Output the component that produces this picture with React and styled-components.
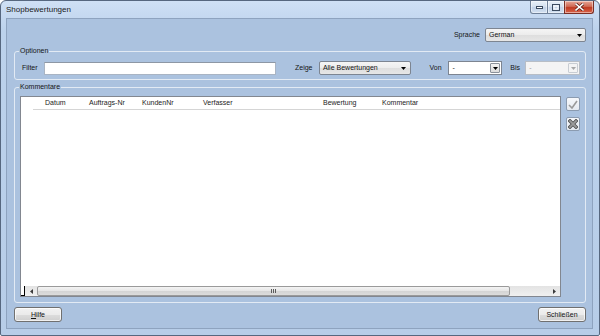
import React from 'react';
import styled, { createGlobalStyle } from 'styled-components';

const Global = createGlobalStyle`
  html, body { margin: 0; padding: 0; background: #ffffff; }
  body { font-family: "Liberation Sans", Arial, sans-serif; font-size: 7px; color: #111; }
  * { box-sizing: border-box; }
`;

const Window = styled.div`
  width: 600px;
  height: 336px;
  display: flex;
  flex-direction: column;
  border: 1px solid #56677f;
  border-radius: 6px 6px 2px 2px;
  background: linear-gradient(#cfe0f5, #bcd2ec 30px, #b7cde8);
  overflow: hidden;
`;

const TitleBar = styled.div`
  height: 17px;
  flex: none;
  display: flex;
  align-items: flex-start;
  padding-left: 5px;
`;

const Title = styled.div`
  font-size: 8px;
  line-height: 8px;
  margin-top: 5px;
  color: #1a1a1a;
`;

const CaptionGroup = styled.div`
  margin-left: auto;
  margin-right: 5px;
  display: flex;
`;

const CaptionBtn = styled.div`
  width: ${p => p.$w}px;
  height: 13px;
  display: flex;
  align-items: center;
  justify-content: center;
  border: 1px solid ${p => (p.$close ? '#7a2f25' : '#6f8098')};
  border-top: none;
  margin-left: -1px;
  background: ${p =>
    p.$close
      ? 'linear-gradient(#e8a898, #d06a55 45%, #c03a22 55%, #d9644a)'
      : 'linear-gradient(#e9f0f8, #d6e2f0 45%, #c3d3e8 55%, #d2e0f0)'};
  border-radius: ${p => p.$r};
  box-shadow: inset 0 0 0 1px rgba(255,255,255,0.45);
`;

const Client = styled.div`
  flex: 1;
  margin: 0 6px 6px 5px;
  background: #abc2df;
  border: 1px solid #8ea3bf;
  display: flex;
  flex-direction: column;
`;

const TopRow = styled.div`
  display: flex;
  justify-content: flex-end;
  align-items: center;
  margin-top: 9px;
  padding-right: 6px;
  height: 14px;
`;

const Label = styled.span`
  display: inline-block;
  width: ${p => (p.$w ? `${p.$w}px` : 'auto')};
  margin-left: ${p => p.$ml || 0}px;
  margin-right: ${p => p.$mr || 0}px;
  line-height: 14px;
  white-space: nowrap;
  color: #151515;
`;

const Combo = styled.div`
  width: ${p => p.$w}px;
  height: 14px;
  display: flex;
  align-items: center;
  padding-left: 3px;
  border: 1px solid ${p => (p.$disabled ? '#b8bec6' : '#7d8591')};
  border-radius: ${p => (p.$edit ? '0' : '2px')};
  background: ${p =>
    p.$disabled
      ? '#f4f4f4'
      : p.$edit
      ? '#ffffff'
      : 'linear-gradient(#f5f5f5, #ececec 50%, #dedede 51%, #e6e6e6)'};
  color: ${p => (p.$disabled ? '#9a9a9a' : '#111')};
  white-space: nowrap;
`;

const ComboText = styled.span`
  flex: 1;
  line-height: 12px;
`;

const ArrowBox = styled.div`
  width: ${p => (p.$boxed ? 10 : 12)}px;
  height: ${p => (p.$boxed ? 10 : 12)}px;
  margin-right: ${p => (p.$boxed ? 1 : 0)}px;
  display: flex;
  align-items: center;
  justify-content: center;
  border: ${p => (p.$boxed ? `1px solid ${p.$disabled ? '#c8cdd3' : '#8b929b'}` : 'none')};
  border-radius: 1px;
  background: ${p =>
    p.$boxed ? (p.$disabled ? '#f4f4f4' : 'linear-gradient(#f3f3f3, #dcdcdc)') : 'transparent'};
`;

const TextInput = styled.div`
  width: ${p => p.$w}px;
  height: 13px;
  background: #ffffff;
  border: 1px solid #a9b4c3;
  border-top-color: #8d97a5;
`;

const Group = styled.div`
  border: 1px solid #e2eaf4;
  border-radius: 3px;
  display: flex;
  flex-direction: column;
  margin: ${p => p.$mt}px 6px 0 7px;
  flex: ${p => (p.$grow ? 1 : 'none')};
  min-height: 0;
`;

const Legend = styled.div`
  align-self: flex-start;
  margin: -5px 0 -3px 4px;
  padding: 0 1px;
  height: 8px;
  line-height: 8px;
  background: #abc2df;
  color: #151515;
`;

const FilterRow = styled.div`
  display: flex;
  align-items: center;
  padding: 9px 5px 4px 6px;
`;

const CommentsBody = styled.div`
  flex: 1;
  display: flex;
  gap: 5px;
  padding: 8px 5px 5px 5px;
  min-height: 0;
`;

const Grid = styled.div`
  flex: 1;
  background: #ffffff;
  border: 1px solid #828790;
  display: flex;
  flex-direction: column;
`;

const HeaderRow = styled.div`
  margin-left: 12px;
  height: 13px;
  border-bottom: 1px solid #d5d5d5;
  display: grid;
  grid-template-columns: 12px 44px 53px 61px 120px 59px 1fr;
  align-items: center;
`;

const HeaderCell = styled.div`
  white-space: nowrap;
  color: #1c1c1c;
  line-height: 12px;
`;

const GridBody = styled.div`
  flex: 1;
`;

const ScrollBar = styled.div`
  height: 10px;
  display: flex;
  background: linear-gradient(#e3e3e3, #f0f0f0);
`;

const Corner = styled.div`
  width: 4px;
  border-right: 1px solid #000;
  border-bottom: 1px solid #000;
  background: #fff;
`;

const ScrollArrow = styled.div`
  width: 12px;
  display: flex;
  align-items: center;
  justify-content: center;
`;

const Thumb = styled.div`
  width: 473px;
  height: 10px;
  border: 1px solid #9a9a9a;
  border-radius: 2px;
  background: linear-gradient(#f4f4f4, #e6e6e6 50%, #d4d4d4 51%, #dcdcdc);
  display: flex;
  align-items: center;
  justify-content: center;
`;

const Grip = styled.div`
  display: flex;
  gap: 1px;
`;

const GripLine = styled.div`
  width: 1px;
  height: 4px;
  background: #5c5c5c;
`;

const Track = styled.div`
  flex: 1;
`;

const SideCol = styled.div`
  width: 14px;
  display: flex;
  flex-direction: column;
  gap: 6px;
  padding-top: 1px;
`;

const SideBtn = styled.div`
  width: 14px;
  height: 14px;
  border: 1px solid #8b9bb0;
  border-radius: 2px;
  background: linear-gradient(#f6f8fb, #e4e9f0);
  display: flex;
  align-items: center;
  justify-content: center;
`;

const BottomRow = styled.div`
  display: flex;
  justify-content: space-between;
  margin: 4px 6px 6px 7px;
`;

const Button = styled.div`
  width: 48px;
  height: 15px;
  border: 1px solid #707070;
  border-radius: 3px;
  background: linear-gradient(#f2f2f2, #ebebeb 50%, #dddddd 51%, #cfcfcf);
  box-shadow: inset 0 0 0 1px rgba(255,255,255,0.7);
  display: flex;
  align-items: center;
  justify-content: center;
  line-height: 12px;
  color: #111;
`;

const Underline = styled.span`
  text-decoration: underline;
`;

const DownArrow = ({ color = '#000' }) => (
  <svg width="5" height="3" viewBox="0 0 5 3">
    <path d="M0 0h5L2.5 3z" fill={color} />
  </svg>
);

const SmallArrow = ({ dir }) => (
  <svg width="3" height="5" viewBox="0 0 3 5">
    <path d={dir === 'left' ? 'M3 0v5L0 2.5z' : 'M0 0v5L3 2.5z'} fill="#3a3a3a" />
  </svg>
);

export default function App() {
  return (
    <>
      <Global />
      <Window>
        <TitleBar>
          <Title>Shopbewertungen</Title>
          <CaptionGroup>
            <CaptionBtn $w={18} $r="0 0 0 3px">
              <svg width="7" height="3" viewBox="0 0 7 3">
                <rect x="0.5" y="0.5" width="6" height="2" fill="#fff" stroke="#3c4b60" strokeWidth="1" />
              </svg>
            </CaptionBtn>
            <CaptionBtn $w={18} $r="0">
              <svg width="8" height="7" viewBox="0 0 8 7">
                <rect x="0.5" y="0.5" width="7" height="6" fill="none" stroke="#3c4b60" strokeWidth="1" />
                <rect x="2" y="2" width="4" height="3" fill="none" stroke="#fff" strokeWidth="1" />
              </svg>
            </CaptionBtn>
            <CaptionBtn $w={30} $r="0 0 3px 0" $close>
              <svg width="9" height="8" viewBox="0 0 9 8">
                <path d="M1 1l7 6M8 1L1 7" stroke="#5a1c14" strokeWidth="3" strokeLinecap="square" />
                <path d="M1 1l7 6M8 1L1 7" stroke="#fff" strokeWidth="1.6" strokeLinecap="square" />
              </svg>
            </CaptionBtn>
          </CaptionGroup>
        </TitleBar>
        <Client>
          <TopRow>
            <Label $mr={5}>Sprache</Label>
            <Combo $w={101}>
              <ComboText>German</ComboText>
              <ArrowBox>
                <DownArrow />
              </ArrowBox>
            </Combo>
          </TopRow>

          <Group $mt={9}>
            <Legend>Optionen</Legend>
            <FilterRow>
              <Label $w={22} $ml={1}>Filter</Label>
              <TextInput $w={233} />
              <Label $w={24} $ml={19}>Zeige</Label>
              <Combo $w={92}>
                <ComboText>Alle Bewertungen</ComboText>
                <ArrowBox>
                  <DownArrow />
                </ArrowBox>
              </Combo>
              <Label $w={19} $ml={19}>Von</Label>
              <Combo $w={54} $edit>
                <ComboText>-</ComboText>
                <ArrowBox $boxed>
                  <DownArrow />
                </ArrowBox>
              </Combo>
              <Label $w={15} $ml={8}>Bis</Label>
              <Combo $w={55} $edit $disabled>
                <ComboText>-</ComboText>
                <ArrowBox $boxed $disabled>
                  <DownArrow color="#a8a8a8" />
                </ArrowBox>
              </Combo>
            </FilterRow>
          </Group>

          <Group $mt={7} $grow>
            <Legend>Kommentare</Legend>
            <CommentsBody>
              <Grid>
                <HeaderRow>
                  <span />
                  <HeaderCell>Datum</HeaderCell>
                  <HeaderCell>Auftrags-Nr</HeaderCell>
                  <HeaderCell>KundenNr</HeaderCell>
                  <HeaderCell>Verfasser</HeaderCell>
                  <HeaderCell>Bewertung</HeaderCell>
                  <HeaderCell>Kommentar</HeaderCell>
                </HeaderRow>
                <GridBody />
                <ScrollBar>
                  <Corner />
                  <ScrollArrow>
                    <SmallArrow dir="left" />
                  </ScrollArrow>
                  <Thumb>
                    <Grip>
                      <GripLine />
                      <GripLine />
                      <GripLine />
                    </Grip>
                  </Thumb>
                  <Track />
                  <ScrollArrow>
                    <SmallArrow dir="right" />
                  </ScrollArrow>
                </ScrollBar>
              </Grid>
              <SideCol>
                <SideBtn>
                  <svg width="10" height="9" viewBox="0 0 10 9">
                    <path d="M1 5l3 3L9 1" fill="none" stroke="#9a9a9a" strokeWidth="1.6" />
                  </svg>
                </SideBtn>
                <SideBtn>
                  <svg width="10" height="10" viewBox="0 0 10 10">
                    <path d="M2 2l6 6M8 2L2 8" stroke="#4f4f4f" strokeWidth="3.4" strokeLinecap="square" />
                    <path d="M2 2l6 6M8 2L2 8" stroke="#9b9b9b" strokeWidth="1.8" strokeLinecap="square" />
                  </svg>
                </SideBtn>
              </SideCol>
            </CommentsBody>
          </Group>

          <BottomRow>
            <Button>
              <span>
                <Underline>H</Underline>ilfe
              </span>
            </Button>
            <Button>Schließen</Button>
          </BottomRow>
        </Client>
      </Window>
    </>
  );
}
